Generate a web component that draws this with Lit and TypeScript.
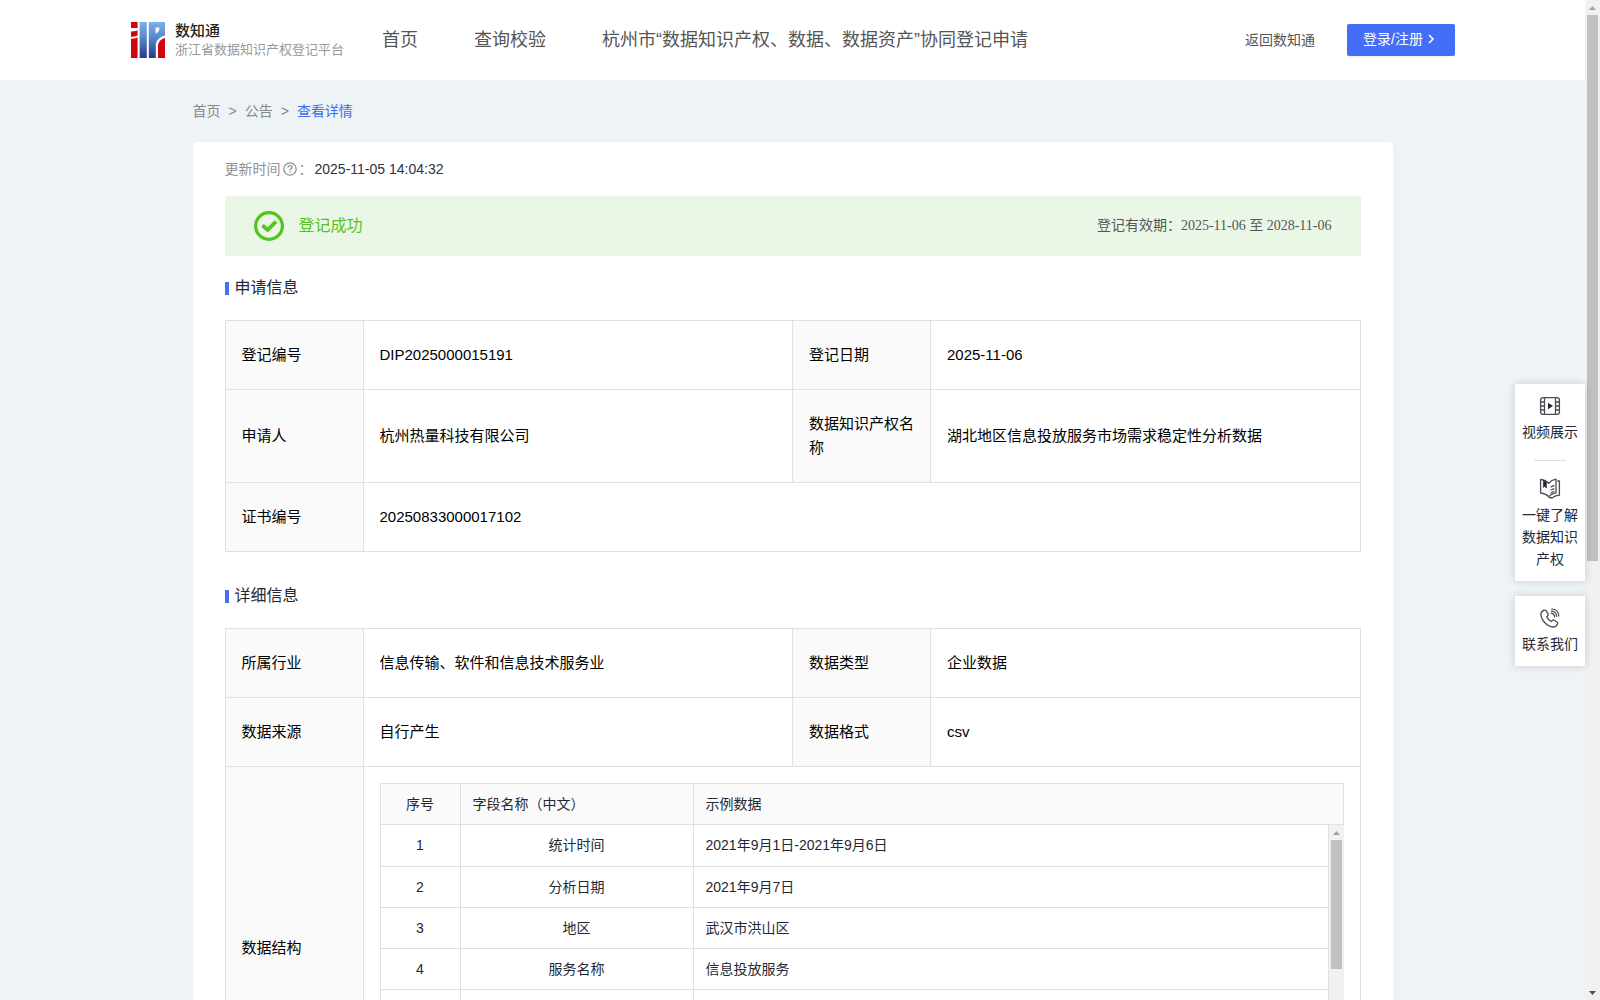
import { LitElement, html, css, svg, nothing } from "lit";
import { customElement, property } from "lit/decorators.js";

interface Cell {
  label: string;
  value: string;
}

const NAV = ["首页", "查询校验", "杭州市“数据知识产权、数据、数据资产”协同登记申请"];

const APPLY_ROWS: Cell[][] = [
  [
    { label: "登记编号", value: "DIP2025000015191" },
    { label: "登记日期", value: "2025-11-06" },
  ],
  [
    { label: "申请人", value: "杭州热量科技有限公司" },
    { label: "数据知识产权名称", value: "湖北地区信息投放服务市场需求稳定性分析数据" },
  ],
  [{ label: "证书编号", value: "20250833000017102" }],
];

const DETAIL_ROWS: Cell[][] = [
  [
    { label: "所属行业", value: "信息传输、软件和信息技术服务业" },
    { label: "数据类型", value: "企业数据" },
  ],
  [
    { label: "数据来源", value: "自行产生" },
    { label: "数据格式", value: "csv" },
  ],
];

const FIELDS: [string, string, string][] = [
  ["1", "统计时间", "2021年9月1日-2021年9月6日"],
  ["2", "分析日期", "2021年9月7日"],
  ["3", "地区", "武汉市洪山区"],
  ["4", "服务名称", "信息投放服务"],
  ["", "", ""],
  ["", "", ""],
  ["", "", ""],
];

const filmIcon = svg`<svg width="22" height="20" viewBox="0 0 22 20" fill="none" stroke="#4a4c55" stroke-width="1.3">
  <rect x="1.6" y="1.6" width="18.8" height="16.8" rx="2.4"/>
  <path d="M5.5 1.6V18.4M16.5 1.6V18.4M1.6 6H5.5M1.6 10H5.5M1.6 14H5.5M16.5 6H20.4M16.5 10H20.4M16.5 14H20.4"/>
  <path d="M9 6.8V13.2L14 10Z" fill="#252834" stroke="none"/>
</svg>`;

const bookIcon = svg`<svg width="22" height="21" viewBox="0 0 22 21" fill="none" stroke="#4a4c55" stroke-width="1.3" stroke-linejoin="round" stroke-linecap="round">
  <path d="M1.6 1.4Q6.6 2 9.6 5.4Q12.4 2 17 1.2V14.8Q12.4 15.6 9.6 18.6Q6.6 15.4 1.6 15Z"/>
  <path d="M18.8 3H20.4V17.2Q16.4 17.4 13 20L10 19.4"/>
  <path d="M4.4 2.4V9.6L6 8.2L7.4 10.2V4Z" fill="#252834" stroke="#252834" stroke-width="0.6"/>
  <path d="M12 8.8L14.8 7.6M12 12L14.8 10.8M12 15L14.8 13.6"/>
</svg>`;

const phoneIcon = svg`<svg width="22" height="20" viewBox="0 0 22 20" fill="none" stroke="#4a4c55" stroke-width="1.3" stroke-linecap="round" stroke-linejoin="round">
  <path d="M5.2 2.2C3 3 1.4 5 2 7.8C3.2 13 7.4 17.6 12.6 18.8C15.4 19.4 17.8 18 18.6 15.8C18.9 15 18.7 14.4 18 14L15.2 12.2C14.5 11.8 13.8 11.9 13.3 12.5L12.4 13.5C10.4 12.6 8.6 10.8 7.8 8.8L8.8 7.8C9.3 7.3 9.4 6.6 9 5.9L7.2 2.8C6.7 2.1 6 1.9 5.2 2.2Z"/>
  <path d="M12.2 5.2C14 5.4 15.4 6.8 15.6 8.8M12.4 3.1C15.4 3.3 17.4 5.4 17.7 8.4M12.6 1C16.8 1.2 19.5 4 19.8 8" stroke-width="1.2"/>
</svg>`;

@customElement("side-scrollbar")
class SideScrollbar extends LitElement {
  @property({ type: Number }) thumb = 50;

  static styles = css`
    :host {
      display: flex;
      flex-direction: column;
      flex: none;
      width: 15px;
      background: #f1f1f1;
    }
    .arrow {
      flex: none;
      width: 15px;
      height: 15px;
    }
    .track {
      flex: 1;
      padding: 0 2px;
    }
    .thumb {
      background: #c1c1c1;
    }
  `;

  render() {
    return html`
      <svg class="arrow" viewBox="0 0 15 15"><path d="M4 10L7.5 6L11 10Z" fill="#a3a3a3" /></svg>
      <div class="track"><div class="thumb" style="height:${this.thumb}%"></div></div>
      <svg class="arrow" viewBox="0 0 15 15"><path d="M4 6L7.5 10L11 6Z" fill="#505050" /></svg>
    `;
  }
}

@customElement("app-root")
class AppRoot extends LitElement {
  static styles = css`
    :host {
      display: flex;
      height: 100vh;
      background: #eef3f6;
      color: #252834;
      font-family: "Liberation Sans", "Noto Sans CJK SC", sans-serif;
      font-size: 14px;
      line-height: 22px;
    }
    * {
      box-sizing: border-box;
    }
    a {
      color: inherit;
      text-decoration: none;
    }
    .page {
      flex: 1;
      min-width: 0;
      overflow-y: auto;
      scrollbar-width: none;
    }
    .header {
      display: flex;
      align-items: center;
      height: 80px;
      padding: 0 130px 0 131px;
      background: #fff;
      color: #555;
    }
    .brand {
      display: flex;
      align-items: center;
      gap: 10px;
    }
    .brand-name {
      font-family: "Noto Sans CJK SC", sans-serif;
      font-size: 15px;
      line-height: 18px;
      font-weight: 500;
      color: #222;
    }
    .brand-sub {
      font-family: "Noto Sans CJK SC", sans-serif;
      font-size: 13px;
      line-height: 20px;
      font-weight: 400;
      color: #999;
    }
    .nav {
      display: flex;
      flex: 1;
      gap: 56px;
      margin-left: 38px;
      font-size: 18px;
      line-height: 24px;
      white-space: nowrap;
    }
    .login {
      display: flex;
      align-items: center;
      height: 32px;
      margin-left: 32px;
      padding: 0 16px 2px;
      border: 0;
      border-radius: 2px;
      background: #446ef5;
      box-shadow: 0 2px 0 rgba(0, 0, 0, 0.04);
      color: #fff;
      font: inherit;
    }
    .login svg {
      margin: 0 1px;
    }
    .main {
      max-width: 1200px;
      margin: 0 auto;
    }
    .crumbs {
      display: flex;
      gap: 8px;
      padding: 20px 0;
      color: #888;
    }
    .crumbs .current {
      color: #3f6cf5;
    }
    .card {
      padding: 16px 32px 32px;
      border-radius: 4px;
      background: #fff;
    }
    .updated {
      display: flex;
      align-items: center;
      color: #909197;
    }
    .updated svg {
      margin: 0 2px;
    }
    .updated time {
      margin-left: 2px;
      color: #30323e;
    }
    .banner {
      display: flex;
      align-items: center;
      height: 60px;
      margin-top: 16px;
      padding: 0 29px;
      background: #ebf7e6;
    }
    .banner-state {
      flex: 1;
      margin-left: 15px;
      font-size: 16px;
      color: #52c41a;
    }
    .banner-term {
      font-family: "Liberation Serif", "Noto Sans CJK SC", serif;
      color: #555;
    }
    .title {
      display: flex;
      align-items: center;
      gap: 6px;
      margin: 20px 0;
      font-size: 16px;
      line-height: 24px;
      font-weight: 400;
    }
    .title::before {
      content: "";
      width: 4px;
      height: 13px;
      background: #446ef5;
    }
    .info {
      width: 100%;
      border-collapse: collapse;
      table-layout: fixed;
      color: #000;
      font-size: 15px;
      line-height: 24px;
    }
    .info + .title {
      margin-top: 32px;
    }
    .col-label {
      width: 138px;
    }
    .info-label,
    .info-value {
      padding: 22px 16px;
      border: 1px solid #e0e0e0;
      text-align: left;
      font-weight: 400;
    }
    .info-label {
      background: #fafafa;
    }
    .nested {
      padding: 16px;
    }
    .fields {
      width: 100%;
      border-collapse: collapse;
      table-layout: fixed;
      color: #252834;
      font-size: 14px;
      line-height: 22px;
    }
    .col-no {
      width: 80px;
    }
    .col-name {
      width: 233px;
    }
    .fields th,
    .fields td {
      height: 41px;
      padding: 0 12px;
      border: 1px solid #e0e0e0;
      text-align: left;
      font-weight: 400;
    }
    .fields th {
      background: #fafafa;
    }
    .fields .mid {
      text-align: center;
    }
    .fields .first td {
      border-top: 0;
    }
    .fields-body {
      display: flex;
      height: 287px;
      overflow: hidden;
    }
    .fields-scroll {
      flex: 1;
      min-width: 0;
      overflow: hidden;
    }
    .float {
      position: absolute;
      top: 384px;
      right: 15px;
      display: flex;
      flex-direction: column;
      gap: 15px;
      width: 70px;
    }
    .float-box {
      display: flex;
      flex-direction: column;
      align-items: center;
      padding: 12px 7px 11px;
      background: #fff;
      box-shadow: 0 0 8px rgba(60, 64, 80, 0.22);
      text-align: center;
    }
    .float-item {
      display: flex;
      flex-direction: column;
      align-items: center;
      gap: 5px;
    }
    .divider {
      width: 32px;
      height: 1px;
      margin: 17px 0;
      background: #e0e0e0;
    }
  `;

  private infoRow(cells: Cell[]) {
    return html`<tr>
      ${cells.map(
        (c) => html`
          <th class="info-label" scope="row">${c.label}</th>
          <td class="info-value" colspan=${cells.length === 1 ? 3 : nothing}>${c.value}</td>
        `
      )}
    </tr>`;
  }

  private infoCols() {
    return html`<colgroup>
      <col class="col-label" />
      <col />
      <col class="col-label" />
      <col />
    </colgroup>`;
  }

  private fieldCols() {
    return html`<colgroup>
      <col class="col-no" />
      <col class="col-name" />
      <col />
    </colgroup>`;
  }

  render() {
    return html`
      <div class="page">
        <header class="header">
          <a class="brand" href="#">
            <svg width="34" height="36" viewBox="0 0 34 36">
              <defs>
                <linearGradient id="blue" x1="0" y1="0" x2="0" y2="1">
                  <stop offset="0" stop-color="#7fb0e6" />
                  <stop offset="0.4" stop-color="#5b8bd0" />
                  <stop offset="1" stop-color="#243a86" />
                </linearGradient>
              </defs>
              <path d="M0 0H6.6V6H0ZM0 9.4Q4 9.6 6.6 8.6V13.6Q4 14.8 0 14.8ZM0 16.8Q4 16.8 6.6 15.6V36H0Z" fill="#d0060c" />
              <path
                d="M8.6 0H15.8V36H8.6ZM17.8 0H34V13.4Q26 15.4 24.8 22V36H17.8ZM24.6 5.4V11.4Q28.4 10.4 28.4 5.4Z"
                fill="url(#blue)"
                fill-rule="evenodd"
              />
              <path d="M27 23Q28 17.4 34 16V36H27Z" fill="#d0060c" />
            </svg>
            <div>
              <div class="brand-name">数知通</div>
              <div class="brand-sub">浙江省数据知识产权登记平台</div>
            </div>
          </a>
          <nav class="nav">${NAV.map((n) => html`<a href="#">${n}</a>`)}</nav>
          <a href="#">返回数知通</a>
          <button class="login" type="button">
            登录/注册
            <svg width="14" height="14" viewBox="0 0 14 14" fill="none" stroke="#fff" stroke-width="1.6">
              <path d="M5 3L9 7L5 11" />
            </svg>
          </button>
        </header>

        <main class="main">
          <nav class="crumbs">
            <a href="#">首页</a><span>&gt;</span><a href="#">公告</a><span>&gt;</span>
            <a class="current" href="#">查看详情</a>
          </nav>

          <section class="card">
            <div class="updated">
              更新时间
              <svg width="14" height="14" viewBox="0 0 14 14" fill="none" stroke="#909197" stroke-width="1.3">
                <circle cx="7" cy="7" r="6.2" />
                <path d="M5 5.6C5 4.4 5.9 3.7 7 3.7S9 4.4 9 5.5C9 6.7 7 6.8 7 8.3M7 9.3V10.5" />
              </svg>
              ：<time>2025-11-05 14:04:32</time>
            </div>

            <div class="banner">
              <svg width="30" height="30" viewBox="0 0 30 30" fill="none" stroke="#52c41a">
                <circle cx="15" cy="15" r="13.4" stroke-width="3.2" />
                <path d="M8.5 14.4L13.6 19L22 10.6" stroke-width="3.8" />
              </svg>
              <div class="banner-state">登记成功</div>
              <div class="banner-term">登记有效期：2025-11-06 至 2028-11-06</div>
            </div>

            <h2 class="title">申请信息</h2>
            <table class="info">
              ${this.infoCols()}
              <tbody>
                ${APPLY_ROWS.map((r) => this.infoRow(r))}
              </tbody>
            </table>

            <h2 class="title">详细信息</h2>
            <table class="info">
              ${this.infoCols()}
              <tbody>
                ${DETAIL_ROWS.map((r) => this.infoRow(r))}
                <tr>
                  <th class="info-label" scope="row">数据结构</th>
                  <td class="info-value nested" colspan="3">
                    <table class="fields">
                      ${this.fieldCols()}
                      <thead>
                        <tr>
                          <th class="mid" scope="col">序号</th>
                          <th scope="col">字段名称（中文）</th>
                          <th scope="col">示例数据</th>
                        </tr>
                      </thead>
                    </table>
                    <div class="fields-body">
                      <div class="fields-scroll">
                        <table class="fields">
                          ${this.fieldCols()}
                          <tbody>
                            ${FIELDS.map(
                              ([no, name, sample], i) => html`<tr class=${i === 0 ? "first" : ""}>
                                <td class="mid">${no}</td>
                                <td class="mid">${name}</td>
                                <td>${sample}</td>
                              </tr>`
                            )}
                          </tbody>
                        </table>
                      </div>
                      <side-scrollbar .thumb=${50}></side-scrollbar>
                    </div>
                  </td>
                </tr>
              </tbody>
            </table>
          </section>
        </main>
      </div>

      <side-scrollbar .thumb=${56.3}></side-scrollbar>

      <aside class="float">
        <div class="float-box">
          <a class="float-item" href="#">${filmIcon}<span>视频展示</span></a>
          <div class="divider"></div>
          <a class="float-item" href="#">${bookIcon}<span>一键了解数据知识产权</span></a>
        </div>
        <div class="float-box">
          <a class="float-item" href="#">${phoneIcon}<span>联系我们</span></a>
        </div>
      </aside>
    `;
  }
}
